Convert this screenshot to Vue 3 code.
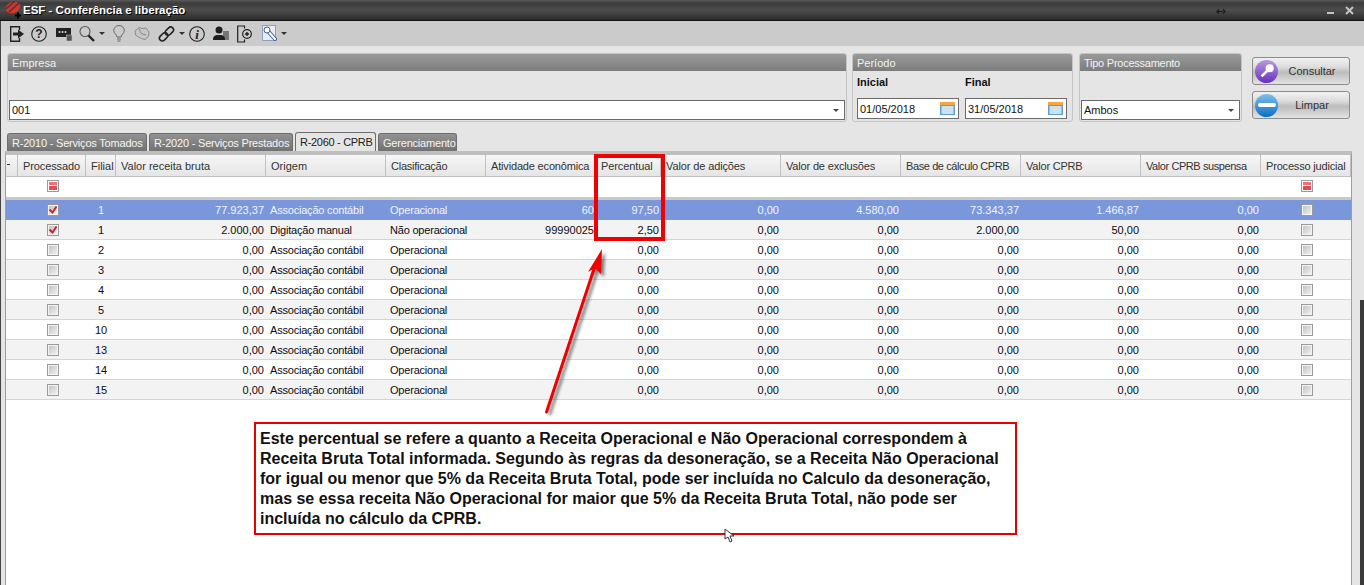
<script setup>
const cols = [
  { t: '', w: 12 }, { t: 'Processado', w: 68, c: true, ls: -0.1 }, { t: 'Filial', w: 30 }, { t: 'Valor receita bruta', w: 150 },
  { t: 'Origem', w: 120 }, { t: 'Clasificação', w: 100, ls: -0.25 }, { t: 'Atividade econômica', w: 110, ls: -0.17 }, { t: 'Percentual', w: 65, ls: -0.1 },
  { t: 'Valor de adições', w: 120, ls: -0.12 }, { t: 'Valor de exclusões', w: 120, ls: -0.17 }, { t: 'Base de cálculo CPRB', w: 120, ls: -0.4 },
  { t: 'Valor CPRB', w: 120, ls: -0.2 }, { t: 'Valor CPRB suspensa', w: 120, ls: -0.42 }, { t: 'Processo judicial', w: 90, ls: -0.18 }
]
const gridCols = cols.map(c => c.w + 'px').join(' ')
const rows = [
  { chk: true, f: '1', v: '77.923,37', o: 'Associação contábil', c: 'Operacional', a: '60', p: '97,50', ad: '0,00', ex: '4.580,00', b: '73.343,37', cp: '1.466,87', s: '0,00', sel: true },
  { chk: true, f: '1', v: '2.000,00', o: 'Digitação manual', c: 'Não operacional', a: '99990025', p: '2,50', ad: '0,00', ex: '0,00', b: '2.000,00', cp: '50,00', s: '0,00' },
  ...['2', '3', '4', '5', '10', '13', '14', '15'].map(f => ({ chk: false, f, v: '0,00', o: 'Associação contábil', c: 'Operacional', a: '', p: '0,00', ad: '0,00', ex: '0,00', b: '0,00', cp: '0,00', s: '0,00' }))
]
</script>

<template>
  <div class="app">
    <header class="titlebar">
      <svg class="logo" width="20" height="18" viewBox="0 0 20 18">
        <ellipse cx="10" cy="6.500" rx="7.500" ry="5.500" fill="#d9342a" transform="rotate(-20 10 6.500)"/>
        <path d="M3 8L12 0M6 11L16 2" stroke="#3a3a3a" stroke-width="1.300"/>
        <path d="M14 11.500h2v2h2v2h-2v2h-2v-2h-2v-2h2z" fill="#000"/>
      </svg>
      <span class="title">ESF - Conferência e liberação</span>
      <svg class="resize" width="10" height="7" viewBox="0 0 10 7"><path d="M0 3.500L3 .5V6.500zM10 3.500L7 .5V6.500zM2 3h6v1H2z" fill="#1c1c1c"/></svg>
      <span class="min"></span>
      <svg class="close" width="9" height="9" viewBox="0 0 9 9"><path d="M1 1l7 7M8 1l-7 7" stroke="#c4c4c4" stroke-width="2"/></svg>
    </header>

    <div class="toolbar">
      <svg width="15" height="18" viewBox="0 0 15 18" fill="none" stroke="#222" stroke-width="1.400"><path d="M10.500 5V1.700H1.700v14.600h8.800V13"/><path d="M4 9h6" stroke-width="3"/><path d="M9 4.500l6 4.500-6 4.500z" fill="#222" stroke="none"/></svg>
      <svg width="16" height="16" viewBox="0 0 16 16" fill="none" stroke="#222" stroke-width="1.100"><circle cx="8" cy="8" r="7.300"/><text x="8" y="12" text-anchor="middle" class="glyph" fill="#222" stroke="none">?</text></svg>
      <svg width="16" height="14" viewBox="0 0 16 14"><rect x="0" y="1" width="15" height="9" fill="#222"/><circle cx="3.500" cy="5" r="1" fill="#ddd"/><circle cx="6.500" cy="5" r="1" fill="#ddd"/><circle cx="9.500" cy="5" r="1" fill="#ddd"/><rect x="10.500" y="8" width="5.500" height="6" fill="#555" stroke="#ccc" stroke-width=".5"/></svg>
      <span class="ddn"><svg width="16" height="17" viewBox="0 0 16 17" fill="none"><circle cx="6" cy="6.500" r="5" stroke="#555" stroke-width="1.100"/><path d="M9.500 10.500l5.500 5.500" stroke="#222" stroke-width="2.400"/></svg><i class="caret"></i></span>
      <svg width="12" height="18" viewBox="0 0 12 18" fill="none" stroke="#666"><path d="M4 12C3.500 9 .7 8.500 .7 5.500a5.300 5 0 0 1 10.600 0c0 3-2.800 3.500-3.300 6.500z"/><path d="M4 14h4M4.500 16h3"/></svg>
      <svg width="16" height="15" viewBox="0 0 16 15" fill="#c6c6c6" stroke="#8c8c8c"><path d="M1 5l4-3.500 3 1 4-.5 3 4-.5 4-3 3.500-4-1-3-1.500L1.500 9z"/><path d="M5 2.500l2 5 5 1.500" fill="none"/></svg>
      <span class="ddn"><svg width="17" height="18" viewBox="0 0 18 18" fill="none" stroke="#222" stroke-width="1.700"><rect x="1" y="9" width="10" height="6" rx="3" transform="rotate(-45 6 12)"/><rect x="7" y="3" width="10" height="6" rx="3" transform="rotate(-45 12 6)"/></svg><i class="caret"></i></span>
      <svg width="16" height="16" viewBox="0 0 16 16" fill="none" stroke="#222" stroke-width="1.100"><circle cx="8" cy="8" r="7.300"/><text x="8" y="12.500" text-anchor="middle" class="glyph i" fill="#222" stroke="none">i</text></svg>
      <svg width="16" height="15" viewBox="0 0 16 15"><rect x="10" y="5" width="6" height="9" fill="#777"/><circle cx="6" cy="4" r="3.500" fill="#1e1e1e"/><path d="M0 14c0-5 3-5 6-5s6 0 6 5z" fill="#1e1e1e"/></svg>
      <svg width="15" height="18" viewBox="0 0 15 18" fill="none" stroke="#222" stroke-width="1.200"><path d="M7.500 3.500V1H.7v16h6.800v-2.500"/><circle cx="10" cy="9" r="4.300"/><path d="M8 9h4M10 7v4" stroke-width="1.400"/></svg>
      <span class="ddn"><svg width="15" height="17" viewBox="0 0 15 17"><rect x=".5" y=".5" width="13" height="15" fill="#e6edf8" stroke="#8aa0c8"/><path d="M5 5l8 9" stroke="#3f5f95" stroke-width="4" stroke-linecap="round"/><path d="M5 5l8 9" stroke="#fff" stroke-width="2" stroke-linecap="round"/><circle cx="5" cy="5" r="3" fill="#fff" stroke="#3f5f95"/></svg><i class="caret wide"></i></span>
    </div>

    <main class="content">
      <section class="filters">
        <div class="panel empresa">
          <div class="phead">Empresa</div>
          <div class="pbody end">
            <div class="field select"><span>001</span><i class="caret dark"></i></div>
          </div>
        </div>
        <div class="panel periodo">
          <div class="phead">Período</div>
          <div class="pbody dates">
            <div class="datecol">
              <b>Inicial</b>
              <div class="field date"><span>01/05/2018</span><svg width="15" height="13" viewBox="0 0 15 13"><rect width="15" height="13" fill="#5a9fd6"/><rect y="0" width="15" height="3" fill="#f1a64a"/><rect x="1.500" y="4" width="12" height="8" fill="#cfe0ef"/></svg></div>
            </div>
            <div class="datecol">
              <b>Final</b>
              <div class="field date"><span>31/05/2018</span><svg width="15" height="13" viewBox="0 0 15 13"><rect width="15" height="13" fill="#5a9fd6"/><rect y="0" width="15" height="3" fill="#f1a64a"/><rect x="1.500" y="4" width="12" height="8" fill="#cfe0ef"/></svg></div>
            </div>
          </div>
        </div>
        <div class="panel tipo">
          <div class="phead tight">Tipo Processamento</div>
          <div class="pbody end">
            <div class="field select"><span>Ambos</span><i class="caret dark"></i></div>
          </div>
        </div>
        <div class="buttons">
          <button class="btn"><span class="orb purple"><svg width="18" height="18" viewBox="0 0 20 20"><circle cx="13" cy="7" r="4.500" fill="#fff"/><path d="M11 9l-7 7" stroke="#fff" stroke-width="3"/></svg></span><span class="lbl">Consultar</span></button>
          <button class="btn"><span class="orb blue"><i class="minus"></i></span><span class="lbl">Limpar</span></button>
        </div>
      </section>

      <nav class="tabs">
        <span class="tab t1">R-2010 - Serviços Tomados</span>
        <span class="tab t2">R-2020 - Serviços Prestados</span>
        <span class="tab t3 on">R-2060 - CPRB</span>
        <span class="tab t4">Gerenciamento</span>
      </nav>

      <section class="grid">
        <div class="ghead" :style="{ gridTemplateColumns: gridCols }">
          <div v-for="(c, i) in cols" :key="i" class="hcell" :class="{ center: c.c, mark: i === 0 }" :style="{ letterSpacing: (c.ls || 0) + 'px' }">{{ c.t }}</div>
        </div>
        <div class="gfilter" :style="{ gridTemplateColumns: gridCols }">
          <div v-for="(c, i) in cols" :key="i" class="fcell">
            <span v-if="i === 1 || i === 13" class="fbox"><i></i></span>
          </div>
        </div>
        <div class="gbody">
          <div v-for="(r, i) in rows" :key="i" class="row" :class="{ sel: r.sel, alt: i % 2 === 1 }" :style="{ gridTemplateColumns: gridCols }">
            <div></div>
            <div class="cc"><span class="chk"><svg v-if="r.chk" width="10" height="10" viewBox="0 0 10 10"><path d="M1.500 4.500l3 3 4-6" fill="none" stroke="#c8233a" stroke-width="2"/></svg></span></div>
            <div class="cn">{{ r.f }}</div>
            <div class="r">{{ r.v }}</div>
            <div class="l">{{ r.o }}</div>
            <div class="l">{{ r.c }}</div>
            <div class="r">{{ r.a }}</div>
            <div class="r">{{ r.p }}</div>
            <div class="r">{{ r.ad }}</div>
            <div class="r">{{ r.ex }}</div>
            <div class="r">{{ r.b }}</div>
            <div class="r">{{ r.cp }}</div>
            <div class="r">{{ r.s }}</div>
            <div class="cc"><span class="chk"></span></div>
          </div>
        </div>
      </section>
    </main>

    <div class="edge"></div>
    <div class="redbox"></div>
    <svg class="arrow" width="90" height="190" viewBox="530 240 90 190">
      <defs><filter id="sh" x="-30%" y="-10%" width="180%" height="130%"><feGaussianBlur stdDeviation="1.500"/></filter></defs>
      <g filter="url(#sh)" opacity=".6" transform="translate(3 3)">
        <path d="M546.500 412L595 266" stroke="#333" stroke-width="3"/><path d="M602 249L601 274L595 268L588 272z" fill="#333"/>
      </g>
      <path d="M546.500 412L595 266" stroke="#f00000" stroke-width="3" stroke-linecap="round"/>
      <path d="M602 249L601 274L595 268L588 272z" fill="#f00000"/>
    </svg>
    <div class="note">Este percentual se refere a quanto a Receita Operacional e Não Operacional correspondem à Receita Bruta Total informada. Segundo às regras da desoneração, se a Receita Não Operacional for igual ou menor que 5% da Receita Bruta Total, pode ser incluída no Calculo da desoneração, mas se essa receita Não Operacional for maior que 5% da Receita Bruta Total, não pode ser incluída no cálculo da CPRB.</div>
    <svg class="cursor" width="12" height="14" viewBox="0 0 12 14"><path d="M1 0v10l3-2 2 5 2-1-2-5h4z" fill="#fff" stroke="#333"/></svg>
  </div>
</template>

<style scoped>
.app { position: relative; width: 1364px; height: 585px; overflow: hidden; background: #e5e5e5; font: 11px "Liberation Sans", Arial, sans-serif; color: #111; display: flex; flex-direction: column; }
.titlebar { height: 21px; flex: none; display: flex; align-items: center; padding: 0 10px 0 3px; box-sizing: border-box; background: linear-gradient(#5a5a5a 0, #3b3b3b 3px, #4c4c4c 10px, #2c2c2c 20px); border-bottom: 1px solid #111; }
.title { color: #fff; font: bold 11.500px "Liberation Sans", sans-serif; text-shadow: 1px 1px 0 #000; flex: 1; }
.resize { margin-right: 101px; margin-top: 3px; }
.min { width: 7px; height: 2px; background: #c4c4c4; margin: 5px 11px 0 0; }
.toolbar { height: 25px; flex: none; background: #cbcbcb; display: grid; grid-template-columns: 22px 25px 23px 34px 21px 24px 31px 24px 24px 25px auto; justify-items: start; align-items: center; padding: 0 0 0 9px; box-sizing: border-box; box-shadow: inset 1px 0 #444; }
.ddn { display: flex; align-items: center; gap: 4px; }
.caret { display: inline-block; border: 3px solid transparent; border-top: 3px solid #333; border-bottom: 0; }
.caret.dark { border-top-color: #444; }
.glyph { font: bold 12px "Liberation Sans", sans-serif; }
.glyph.i { font: italic bold 13px "Liberation Serif", serif; }
.content { flex: 1; display: flex; flex-direction: column; padding: 7px 12px 0 5px; min-height: 0; box-shadow: inset 1px 0 #444; }
.filters { display: flex; height: 69px; flex: none; padding-left: 2px; }
.panel { display: flex; flex-direction: column; border: 1px solid #c4c4c4; border-radius: 3px; box-sizing: border-box; background: #e5e5e5; }
.empresa { width: 840px; margin-right: 5px; }
.periodo { width: 221px; margin-right: 6px; }
.tipo { width: 163px; margin-right: 10px; }
.phead { height: 17px; flex: none; background: linear-gradient(#9a9a9a, #7c7c7c); color: #f1f1f1; padding: 1px 0 0 4px; box-sizing: border-box; line-height: 17px; border-radius: 2px 2px 0 0; }
.phead.tight { letter-spacing: -.25px; }
.pbody { flex: 1; display: flex; padding: 0 1px 1px; }
.pbody.end { align-items: flex-end; }
.field { background: #fff; border: 1px solid #6b6b6b; height: 20px; box-sizing: border-box; display: flex; align-items: center; padding: 0 2px; flex: 1; font-size: 11px; }
.field span { flex: 1; }
.select .caret { margin-right: 3px; }
.dates { gap: 6px; padding: 0 4px 2px 4px; }
.datecol { display: flex; flex-direction: column; width: 102px; justify-content: space-between; padding-top: 5px; }
.datecol b { font-size: 11px; }
.date { flex: none; height: 21px; }
.date svg { margin-right: 1px; }
.buttons { display: flex; flex-direction: column; gap: 6px; padding-top: 4px; width: 98px; }
.btn { width: 98px; height: 28px; padding: 0; display: flex; align-items: center; background: linear-gradient(#f2f2f2, #dcdcdc 35%, #bcbcbc 55%, #e2e2e2); border: 1px solid #8c8c8c; border-radius: 3px; font: inherit; color: #333; }
.orb { width: 23px; height: 23px; border-radius: 50%; margin-left: 2px; flex: none; display: flex; align-items: center; justify-content: center; }
.purple { background: linear-gradient(#b89bdc, #6a2fc0); }
.blue { background: linear-gradient(#7cc0ee, #0b6fc4); }
.minus { width: 18px; height: 4px; background: #fff; border-radius: 2px; }
.lbl { flex: 1; text-align: center; padding-right: 3px; }
.tabs { display: flex; gap: 2px; height: 18px; flex: none; margin-top: 11px; padding-left: 2px; align-items: flex-end; }
.tab { height: 18px; line-height: 18px; padding-left: 4px; box-sizing: border-box; background: linear-gradient(#929292, #727272); color: #f4f4f4; border: 1px solid #6e6e6e; border-bottom: 0; border-radius: 3px 3px 0 0; white-space: nowrap; letter-spacing: -.2px; }
.t1 { width: 140px; }
.t2 { width: 144px; }
.t3 { width: 81px; }
.t4 { width: 79px; }
.tab.on { height: 19px; background: #e5e5e5; color: #222; line-height: 18px; letter-spacing: -.3px; }
.grid { flex: 1; display: flex; flex-direction: column; background: #fff; border: 1px solid #9e9e9e; border-top: 4px solid #bfbfbf; border-bottom: 0; min-height: 0; width: 1347px; box-sizing: border-box; }
.ghead, .gfilter, .row { display: grid; }
.ghead { height: 22px; background: linear-gradient(#f7f7f7, #e5e5e5); border-bottom: 1px solid #c0c0c0; box-sizing: border-box; }
.hcell { padding: 1px 0 0 5px; line-height: 20px; border-right: 1px solid #c0c0c0; color: #333; white-space: nowrap; overflow: hidden; position: relative; }
.hcell.center { text-align: center; padding-left: 0; }
.hcell.mark::before { content: ""; position: absolute; left: 1px; top: 9px; width: 3px; height: 1px; background: #333; }
.gfilter { height: 20px; }
.fcell { display: flex; align-items: center; justify-content: center; padding-bottom: 2px; box-sizing: border-box; }
.fbox { width: 12px; height: 12px; margin-left: 1px; box-sizing: border-box; border: 1px solid #9a9a9a; padding: 1px; display: flex; background: #fff; }
.fbox i { flex: 1; background: linear-gradient(#f26d76 0 40%, #fff 40% 55%, #e64b55 55%); }
.gbody { border-top: 3px solid #c9c9c9; }
.row { height: 20px; box-sizing: border-box; border-bottom: 1px solid #cdd5e6; padding-top: 1px; line-height: 18px; white-space: nowrap; color: #0c0c14; }
.row.alt { background: #f3f3f3; }
.row.sel { background: #7a97dc; color: #f2f4fa; border-bottom-color: #7a97dc; }
.r { text-align: right; padding-right: 2px; }
.l { padding-left: 4px; letter-spacing: -.2px; }
.cn { text-align: center; }
.cc { display: flex; align-items: center; justify-content: center; padding-bottom: 1px; }
.chk { width: 12px; height: 12px; margin-left: 1px; box-sizing: border-box; border: 1px solid #9a9a9a; box-shadow: inset 0 0 0 1px #f4f4f4; background: linear-gradient(135deg, #bdbdbd, #f6f6f6); display: flex; align-items: center; justify-content: center; }
.edge { position: absolute; right: 0; top: 300px; bottom: 0; width: 4px; background: #3a3a3a; }
.redbox { position: absolute; left: 594px; top: 154px; width: 71px; height: 87px; box-sizing: border-box; border: 4px solid #f00000; }
.arrow { position: absolute; left: 530px; top: 240px; }
.note { position: absolute; left: 254px; top: 422px; width: 763px; height: 113px; box-sizing: border-box; border: 2px solid #e60000; background: #fff; padding: 5px 12px 0 4px; font: bold 16px/20px "Liberation Sans", Arial, sans-serif; color: #111; }
.cursor { position: absolute; left: 724px; top: 529px; }
</style>
